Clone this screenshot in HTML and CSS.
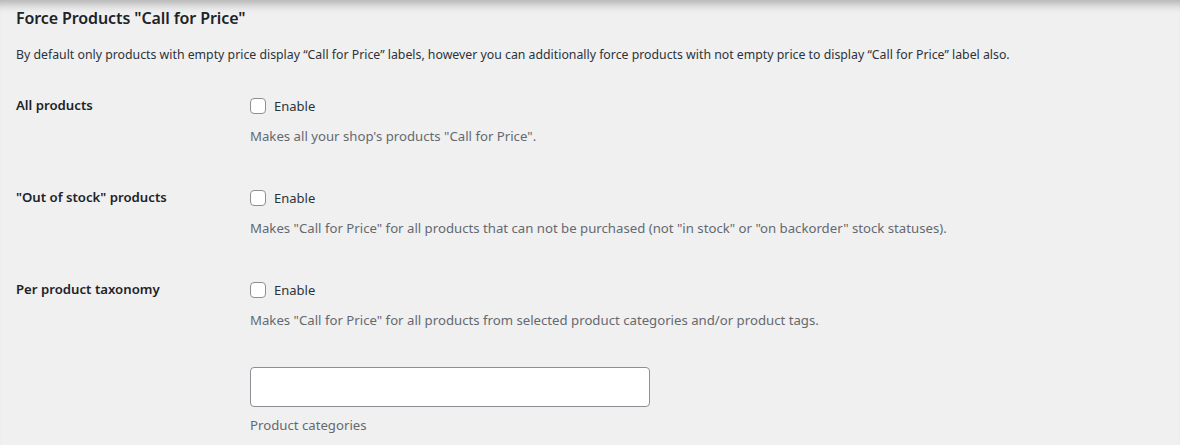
FILE: index.html
```html
<!DOCTYPE html>
<html lang="en">
<head>
    <meta charset="UTF-8">
    <meta name="viewport" content="width=device-width, initial-scale=1.0">
    <title>Call for Price Settings</title>
    <link rel="stylesheet" href="styles.css">
</head>
<body>

    <div class="wrap">
        <h2 class="sectionTitle">Force Products "Call for Price"</h2>
        <p class="sectionDesc">By default only products with empty price display “Call for Price” labels, however you can additionally force products with not empty price to display “Call for Price” label also.</p>

        <div class="formTable">
            <!-- All products -->
            <div class="row">
                <div class="rowLabel">All products</div>
                <div class="rowField">
                    <label class="check"><input type="checkbox"> Enable</label>
                    <p class="hint">Makes all your shop's products "Call for Price".</p>
                </div>
            </div>

            <!-- Out of stock -->
            <div class="row">
                <div class="rowLabel">"Out of stock" products</div>
                <div class="rowField">
                    <label class="check"><input type="checkbox"> Enable</label>
                    <p class="hint">Makes "Call for Price" for all products that can not be purchased (not "in stock" or "on backorder" stock statuses).</p>
                </div>
            </div>

            <!-- Taxonomy -->
            <div class="row">
                <div class="rowLabel">Per product taxonomy</div>
                <div class="rowField">
                    <label class="check"><input type="checkbox"> Enable</label>
                    <p class="hint">Makes "Call for Price" for all products from selected product categories and/or product tags.</p>
                    <div class="selectBox"></div>
                    <p class="hint fieldCaption">Product categories</p>
                </div>
            </div>
        </div>
    </div>

</body>
</html>
```

FILE: styles.css
```css
body {
    margin: 0;
    background-color: #f0f0f1;
    color: #1d2327;
    font-family: "Noto Sans", "Open Sans", sans-serif;
    font-size: 13px;
    height: 445px;
    overflow: hidden;
    box-shadow: inset 0 12px 10px -8px rgba(0, 0, 0, 0.28);
}

.wrap {
    padding: 7px 16px 0 16px;
}

.sectionTitle {
    font-size: 16px;
    font-weight: 600;
    letter-spacing: -0.1px;
    line-height: 22px;
    margin: 0;
}

.sectionDesc {
    margin: 16px 0 0 0;
    font-size: 12.3px;
    line-height: 20px;
    color: #2c3338;
}

.formTable {
    margin-top: 11px;
}

.row {
    display: flex;
    padding: 19px 0 22px 0;
}

.rowLabel {
    width: 234px;
    flex-shrink: 0;
    font-size: 13.2px;
    font-weight: 600;
    line-height: 20px;
}

.check {
    display: flex;
    align-items: center;
    gap: 8px;
    font-size: 13px;
    line-height: 22px;
    color: #2c3338;
}

.check input {
    appearance: none;
    margin: 0;
    width: 16px;
    height: 16px;
    border: 1px solid #8c8f94;
    border-radius: 4px;
    background: #fff;
}

.hint {
    margin: 9px 0 0 0;
    font-size: 13.2px;
    line-height: 20px;
    color: #646970;
}

.selectBox {
    margin-top: 37px;
    width: 398px;
    height: 38px;
    background: #fff;
    border: 1px solid #8c8f94;
    border-radius: 4px;
}

.fieldCaption {
    margin-top: 8px;
}
```
